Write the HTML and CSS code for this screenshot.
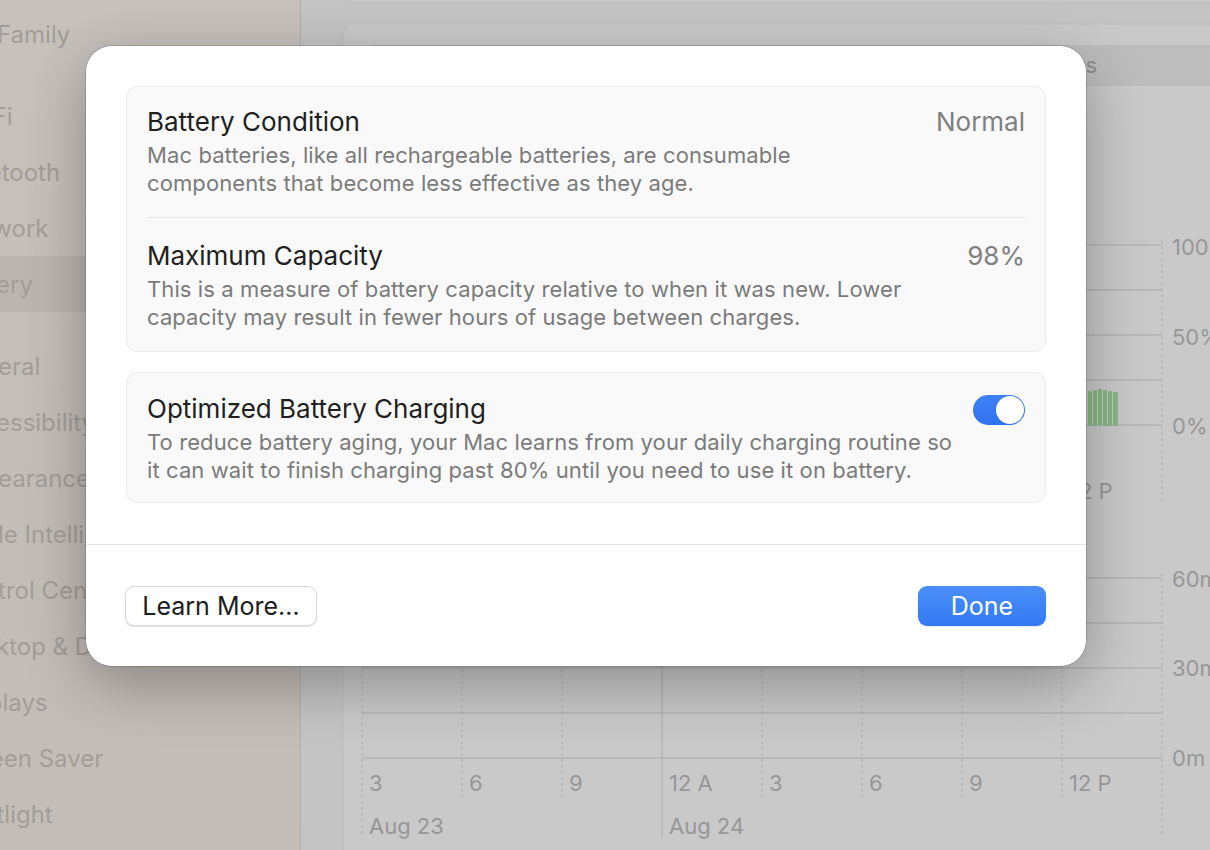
FILE: index.html
```html
<!DOCTYPE html>
<html lang="en">
<head>
<meta charset="utf-8">
<title>Battery Health</title>
<link rel="stylesheet" href="styles.css">
</head>
<body>
<div class="window">
  <aside class="sidebar">
    <div class="item item-first"><span>Family</span></div>
    <div class="group">
      <div class="item"><span>Wi-Fi</span></div>
      <div class="item"><span>Bluetooth</span></div>
      <div class="item"><span>Network</span></div>
      <div class="item selected"><span>Battery</span></div>
    </div>
    <div class="group">
      <div class="item"><span>General</span></div>
      <div class="item"><span>Accessibility</span></div>
      <div class="item"><span>Appearance</span></div>
      <div class="item"><span>Apple Intelligence &amp; Siri</span></div>
      <div class="item"><span>Control Center</span></div>
      <div class="item"><span>Desktop &amp; Dock</span></div>
      <div class="item"><span>Displays</span></div>
      <div class="item"><span>Screen Saver</span></div>
      <div class="item"><span>Spotlight</span></div>
    </div>
  </aside>
  <main class="content">
    <svg class="chart" width="909" height="850" viewBox="301 0 909 850" xmlns="http://www.w3.org/2000/svg">
      <rect x="343" y="-40" width="900" height="43" rx="12" fill="#c8c8c8" stroke="#bcbcbc"/>
      <rect x="343" y="24" width="900" height="860" rx="12" fill="#c9c9c9" stroke="#bdbdbd"/>
      <rect x="365" y="45" width="900" height="41" rx="8" fill="#bdbdbd"/>
      <text x="1097" y="73" text-anchor="end" class="seg">Last 24 Hours</text>

      <g stroke="#b3b3b3" stroke-width="1.5">
        <line x1="362" y1="245" x2="1162" y2="245"/>
        <line x1="362" y1="290" x2="1162" y2="290"/>
        <line x1="362" y1="335" x2="1162" y2="335"/>
        <line x1="362" y1="380" x2="1162" y2="380"/>
        <line x1="362" y1="425" x2="1162" y2="425"/>
        <line x1="362" y1="578" x2="1162" y2="578"/>
        <line x1="362" y1="623" x2="1162" y2="623"/>
        <line x1="362" y1="668" x2="1162" y2="668"/>
        <line x1="362" y1="713" x2="1162" y2="713"/>
        <line x1="362" y1="758" x2="1162" y2="758"/>
        <line x1="662" y1="240" x2="662" y2="505"/>
        <line x1="662" y1="573" x2="662" y2="837"/>
      </g>
      <g stroke="#b0b0b0" stroke-width="1" stroke-dasharray="3 3">
        <line x1="362" y1="240" x2="362" y2="505"/>
        <line x1="462" y1="240" x2="462" y2="505"/>
        <line x1="562" y1="240" x2="562" y2="505"/>
        <line x1="762" y1="240" x2="762" y2="505"/>
        <line x1="862" y1="240" x2="862" y2="505"/>
        <line x1="962" y1="240" x2="962" y2="505"/>
        <line x1="1062" y1="240" x2="1062" y2="505"/>
        <line x1="1162" y1="240" x2="1162" y2="505"/>
        <line x1="362" y1="573" x2="362" y2="837"/>
        <line x1="462" y1="573" x2="462" y2="800"/>
        <line x1="562" y1="573" x2="562" y2="800"/>
        <line x1="762" y1="573" x2="762" y2="800"/>
        <line x1="862" y1="573" x2="862" y2="800"/>
        <line x1="962" y1="573" x2="962" y2="800"/>
        <line x1="1062" y1="573" x2="1062" y2="800"/>
        <line x1="1162" y1="573" x2="1162" y2="837"/>
      </g>
      <g fill="#88b784">
        <rect x="1088" y="391" width="4" height="35" rx="1"/>
        <rect x="1093" y="390" width="4" height="36" rx="1"/>
        <rect x="1098" y="389" width="4" height="37" rx="1"/>
        <rect x="1103" y="390" width="4" height="36" rx="1"/>
        <rect x="1108" y="391" width="4" height="35" rx="1"/>
        <rect x="1113" y="392" width="5" height="34" rx="1"/>
      </g>
      <g class="axis">
        <text x="1172" y="255">100%</text>
        <text x="1172" y="345">50%</text>
        <text x="1172" y="434">0%</text>
        <text x="1070" y="499">12 P</text>
        <text x="1172" y="587">60m</text>
        <text x="1172" y="676">30m</text>
        <text x="1172" y="766">0m</text>
        <text x="369" y="791">3</text>
        <text x="469" y="791">6</text>
        <text x="569" y="791">9</text>
        <text x="669" y="791">12 A</text>
        <text x="769" y="791">3</text>
        <text x="869" y="791">6</text>
        <text x="969" y="791">9</text>
        <text x="1069" y="791">12 P</text>
        <text x="369" y="834">Aug 23</text>
        <text x="669" y="834">Aug 24</text>
      </g>
    </svg>
  </main>
</div>

<div class="sheet">
  <div class="sheet-body">
    <div class="card">
      <div class="row row-first">
        <div class="row-text">
          <div class="row-title">Battery Condition</div>
          <div class="row-desc">Mac batteries, like all rechargeable batteries, are consumable<br>components that become less effective as they age.</div>
        </div>
        <div class="row-value">Normal</div>
      </div>
      <div class="sep"></div>
      <div class="row row-second">
        <div class="row-text">
          <div class="row-title">Maximum Capacity</div>
          <div class="row-desc">This is a measure of battery capacity relative to when it was new. Lower<br>capacity may result in fewer hours of usage between charges.</div>
        </div>
        <div class="row-value">98%</div>
      </div>
    </div>
    <div class="card">
      <div class="row row-toggle">
        <div class="row-text">
          <div class="row-title">Optimized Battery Charging</div>
          <div class="row-desc">To reduce battery aging, your Mac learns from your daily charging routine so<br>it can wait to finish charging past 80% until you need to use it on battery.</div>
        </div>
        <div class="toggle"><div class="knob"></div></div>
      </div>
    </div>
  </div>
  <div class="sheet-footer">
    <button class="btn btn-secondary">Learn More…</button>
    <button class="btn btn-primary">Done</button>
  </div>
</div>
</body>
</html>
```

FILE: styles.css
```css
* { box-sizing: border-box; }

html, body {
  margin: 0;
  padding: 0;
  width: 1210px;
  height: 850px;
  overflow: hidden;
  font-family: "Inter", "Noto Sans", "Liberation Sans", sans-serif;
}

body {
  position: relative;
  background: #c4c4c4;
}

.window {
  display: flex;
  width: 1210px;
  height: 850px;
}

/* ---------- Sidebar (dimmed) ---------- */
.sidebar {
  width: 301px;
  flex: none;
  overflow: hidden;
  background: linear-gradient(180deg, #c6c1bc 0%, #c3bdb8 60%, #c4bdb7 100%);
  border-right: 1px solid #b5b0ab;
  padding-top: 6px;
  display: flex;
  flex-direction: column;
  gap: 26px;
  color: #a29d98;
  font-size: 24px;
  white-space: nowrap;
}

.group {
  display: flex;
  flex-direction: column;
}

.item {
  height: 56px;
  display: flex;
  align-items: center;
}

.item span {
  margin-left: -48px;
}

.item-first span {
  margin-left: -3px;
}

.item.selected {
  background: #bab5b0;
}

/* ---------- Main (dimmed chart) ---------- */
.content {
  flex: 1;
  overflow: hidden;
  background: #c4c4c4;
}

.chart {
  display: block;
}

.chart .seg {
  font-family: "Inter", "Noto Sans", sans-serif;
  font-size: 22px;
  fill: #8e8e8e;
}

.chart .axis text {
  font-family: "Inter", "Noto Sans", sans-serif;
  font-size: 22px;
  fill: #979797;
}

/* ---------- Sheet ---------- */
.sheet {
  position: absolute;
  left: 86px;
  top: 46px;
  width: 1000px;
  height: 620px;
  background: #ffffff;
  border-radius: 26px;
  box-shadow: 0 0 0 1px rgba(0, 0, 0, 0.14), 0 18px 60px rgba(0, 0, 0, 0.30);
  display: flex;
  flex-direction: column;
}

.sheet-body {
  padding: 40px 40px 41px;
  display: flex;
  flex-direction: column;
  gap: 20px;
  border-bottom: 1px solid #e4e4e4;
}

.card {
  background: #f9f9f9;
  border: 1px solid #ebebeb;
  border-radius: 11px;
}

.row {
  display: flex;
  align-items: flex-start;
  justify-content: space-between;
  padding: 20px 20px 20px;
}

.row-second { padding: 23px 20px 20px; }
.row-toggle { padding: 21px 20px 18px; }

.row-title {
  font-size: 26px;
  line-height: 30px;
  color: #1f1f1f;
}

.row-desc {
  margin-top: 4px;
  font-size: 22px;
  line-height: 28px;
  letter-spacing: 0.1px;
  color: #7b7b7b;
  white-space: nowrap;
}

.row-value {
  font-size: 26px;
  line-height: 30px;
  color: #7f7f7f;
}

.sep {
  height: 1px;
  margin: 0 20px;
  background: #e3e3e3;
}

.toggle {
  margin-top: 1px;
  width: 52px;
  height: 30px;
  border-radius: 15px;
  background: linear-gradient(180deg, #3f82f7 0%, #2f72ee 100%);
  display: flex;
  justify-content: flex-end;
  align-items: center;
  padding: 1px;
}

.knob {
  width: 28px;
  height: 28px;
  border-radius: 50%;
  background: #ffffff;
  box-shadow: 0 0 0 0.5px rgba(0, 0, 0, 0.1);
}

.sheet-footer {
  flex: 1;
  display: flex;
  justify-content: space-between;
  align-items: flex-start;
  padding: 41px 40px 0 39px;
}

.btn {
  font-family: inherit;
  font-size: 25px;
  height: 40px;
  border-radius: 9px;
  padding: 0 12px;
  cursor: default;
}

.btn-secondary {
  width: 192px;
  background: #ffffff;
  color: #1d1d1d;
  border: 1px solid #d9d9d9;
  box-shadow: 0 1px 1.5px rgba(0, 0, 0, 0.12);
}

.btn-primary {
  width: 128px;
  background: linear-gradient(180deg, #4a8ff8 0%, #3479f3 100%);
  color: #ffffff;
  border: none;
  box-shadow: 0 1px 1.5px rgba(0, 0, 0, 0.1);
}
```
